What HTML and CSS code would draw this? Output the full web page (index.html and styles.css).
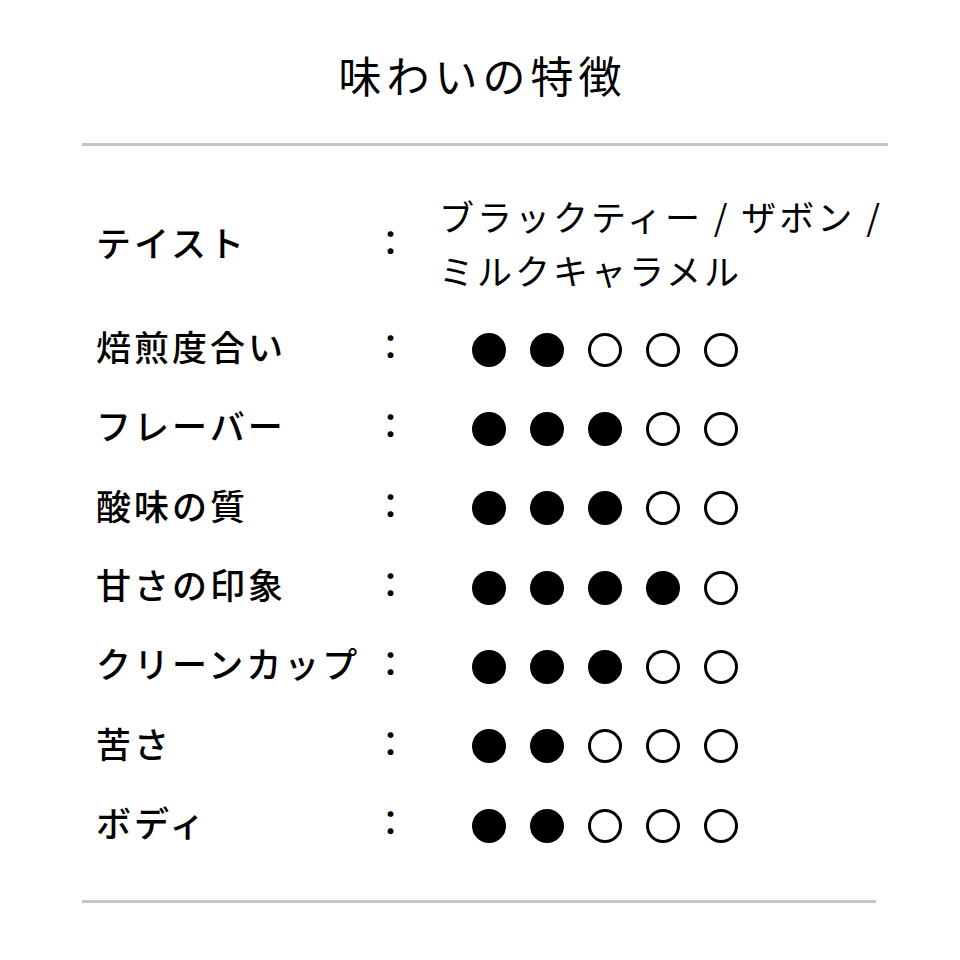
FILE: index.html
```html
<!DOCTYPE html>
<html lang="ja">
<head>
<meta charset="utf-8">
<title>味わいの特徴</title>
<link rel="stylesheet" href="styles.css">
</head>
<body>
<div class="page">
  <header class="head"><h1 class="title">味わいの特徴</h1></header>
  <div class="rule rule-top"></div>
  <div class="specs">
    <div class="row row-multi">
      <div class="label">テイスト</div>
      <div class="colon">：</div>
      <div class="value">ブラックティー / ザボン /<br>ミルクキャラメル</div>
    </div>
    <div class="row">
      <div class="label">焙煎度合い</div>
      <div class="colon">：</div>
      <div class="dots"><span class="dot on"></span><span class="dot on"></span><span class="dot"></span><span class="dot"></span><span class="dot"></span></div>
    </div>
    <div class="row">
      <div class="label">フレーバー</div>
      <div class="colon">：</div>
      <div class="dots"><span class="dot on"></span><span class="dot on"></span><span class="dot on"></span><span class="dot"></span><span class="dot"></span></div>
    </div>
    <div class="row">
      <div class="label">酸味の質</div>
      <div class="colon">：</div>
      <div class="dots"><span class="dot on"></span><span class="dot on"></span><span class="dot on"></span><span class="dot"></span><span class="dot"></span></div>
    </div>
    <div class="row">
      <div class="label">甘さの印象</div>
      <div class="colon">：</div>
      <div class="dots"><span class="dot on"></span><span class="dot on"></span><span class="dot on"></span><span class="dot on"></span><span class="dot"></span></div>
    </div>
    <div class="row">
      <div class="label">クリーンカップ</div>
      <div class="colon">：</div>
      <div class="dots"><span class="dot on"></span><span class="dot on"></span><span class="dot on"></span><span class="dot"></span><span class="dot"></span></div>
    </div>
    <div class="row">
      <div class="label">苦さ</div>
      <div class="colon">：</div>
      <div class="dots"><span class="dot on"></span><span class="dot on"></span><span class="dot"></span><span class="dot"></span><span class="dot"></span></div>
    </div>
    <div class="row">
      <div class="label">ボディ</div>
      <div class="colon">：</div>
      <div class="dots"><span class="dot on"></span><span class="dot on"></span><span class="dot"></span><span class="dot"></span><span class="dot"></span></div>
    </div>
  </div>
  <div class="rule rule-bottom"></div>
</div>
</body>
</html>
```
FILE: styles.css
```css
html, body {
  margin: 0;
  padding: 0;
  background: #ffffff;
}
body {
  font-family: "Noto Sans CJK JP", "Noto Sans", sans-serif;
  color: #000000;
}
.page {
  width: 960px;
  height: 960px;
  box-sizing: border-box;
}
.head {
  height: 143px;
  box-sizing: border-box;
  padding-top: 6px;
  display: flex;
  align-items: center;
  justify-content: center;
}
.title {
  margin: 0;
  font-size: 43px;
  font-weight: 400;
  line-height: 1;
  letter-spacing: 5px;
  padding-left: 5px;
}
.rule {
  height: 3px;
  background: #c6c3c3;
  margin-left: 82px;
}
.rule-top {
  width: 806px;
}
.rule-bottom {
  width: 794px;
  margin-top: 35px;
}
.specs {
  margin-top: 45px;
  padding-left: 96px;
}
.row {
  display: flex;
  align-items: center;
  height: 79.33px;
}
.row-multi {
  height: 108px;
  margin-bottom: 11px;
}
.label {
  width: 277px;
  flex: none;
  font-size: 35px;
  font-weight: 500;
  letter-spacing: 3px;
  line-height: 1;
  white-space: nowrap;
  padding-bottom: 8px;
}
.colon {
  width: 66px;
  flex: none;
  font-size: 35px;
  font-weight: 500;
  line-height: 1;
  padding-bottom: 10px;
}
.value {
  font-size: 35px;
  font-weight: 400;
  letter-spacing: 3px;
  line-height: 54px;
  white-space: nowrap;
  padding-bottom: 4px;
}
.dots {
  display: flex;
  gap: 24px;
  padding-left: 33px;
}
.dot {
  width: 34px;
  height: 34px;
  box-sizing: border-box;
  border-radius: 50%;
  border: 3.5px solid #000000;
}
.dot.on {
  background: #000000;
}
```
